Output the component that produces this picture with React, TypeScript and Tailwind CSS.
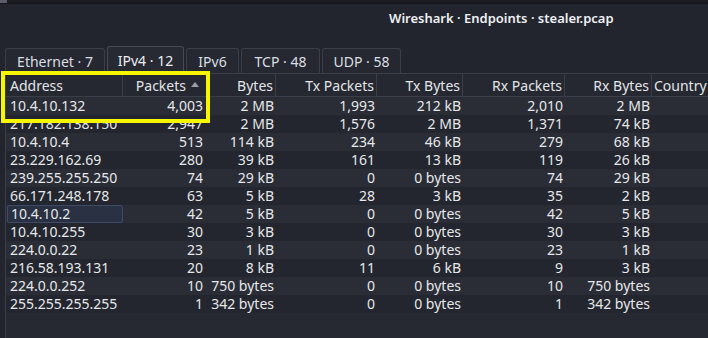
import React from 'react';

interface EndpointRow {
  address: string;
  packets: string;
  bytes: string;
  txPackets: string;
  txBytes: string;
  rxPackets: string;
  rxBytes: string;
}

const rows: EndpointRow[] = [
  { address: '10.4.10.132', packets: '4,003', bytes: '2 MB', txPackets: '1,993', txBytes: '212 kB', rxPackets: '2,010', rxBytes: '2 MB' },
  { address: '217.182.138.150', packets: '2,947', bytes: '2 MB', txPackets: '1,576', txBytes: '2 MB', rxPackets: '1,371', rxBytes: '74 kB' },
  { address: '10.4.10.4', packets: '513', bytes: '114 kB', txPackets: '234', txBytes: '46 kB', rxPackets: '279', rxBytes: '68 kB' },
  { address: '23.229.162.69', packets: '280', bytes: '39 kB', txPackets: '161', txBytes: '13 kB', rxPackets: '119', rxBytes: '26 kB' },
  { address: '239.255.255.250', packets: '74', bytes: '29 kB', txPackets: '0', txBytes: '0 bytes', rxPackets: '74', rxBytes: '29 kB' },
  { address: '66.171.248.178', packets: '63', bytes: '5 kB', txPackets: '28', txBytes: '3 kB', rxPackets: '35', rxBytes: '2 kB' },
  { address: '10.4.10.2', packets: '42', bytes: '5 kB', txPackets: '0', txBytes: '0 bytes', rxPackets: '42', rxBytes: '5 kB' },
  { address: '10.4.10.255', packets: '30', bytes: '3 kB', txPackets: '0', txBytes: '0 bytes', rxPackets: '30', rxBytes: '3 kB' },
  { address: '224.0.0.22', packets: '23', bytes: '1 kB', txPackets: '0', txBytes: '0 bytes', rxPackets: '23', rxBytes: '1 kB' },
  { address: '216.58.193.131', packets: '20', bytes: '8 kB', txPackets: '11', txBytes: '6 kB', rxPackets: '9', rxBytes: '3 kB' },
  { address: '224.0.0.252', packets: '10', bytes: '750 bytes', txPackets: '0', txBytes: '0 bytes', rxPackets: '10', rxBytes: '750 bytes' },
  { address: '255.255.255.255', packets: '1', bytes: '342 bytes', txPackets: '0', txBytes: '0 bytes', rxPackets: '1', rxBytes: '342 bytes' },
];

const tabs = [
  { label: 'Ethernet · 7', width: 'w-[100px]' },
  { label: 'IPv4 · 12', width: 'w-[77px]', active: true },
  { label: 'IPv6', width: 'w-[53px]' },
  { label: 'TCP · 48', width: 'w-[79px]' },
  { label: 'UDP · 58', width: 'w-[79px]' },
];

const cols = 'grid grid-cols-[117px_87px_66px_101px_86px_102px_87px_1fr]';

const App: React.FC = () => {
  return (
    <div
      className="relative w-[708px] h-[338px] overflow-hidden bg-[#22252d] text-[#e6e7ea]"
      style={{ fontFamily: '"Noto Sans", "Open Sans", sans-serif' }}
    >
      {/* title bar */}
      <div className="h-[4px] bg-[#1a1c22] border-b border-[#121419] flex">
        <div className="w-[7px] h-[3px] bg-[#5a5e6a]" />
      </div>
      <div className="h-[30px] flex items-center pl-[389px] text-[13px] font-semibold text-[#eef0f4]">
        Wireshark · Endpoints · stealer.pcap
      </div>

      {/* tabs */}
      <div className="mt-[12px] pl-[5px] flex items-end gap-[2px] h-[27px]">
        {tabs.map((t) => (
          <div
            key={t.label}
            className={`${t.width} flex items-center justify-center text-[14px] border border-b-0 rounded-t-[3px] ${
              t.active
                ? 'h-[27px] bg-[#272a33] border-[#454a55] text-[#eceef2]'
                : 'h-[25px] bg-[#252831] border-[#3a3e48] text-[#dcdee3]'
            }`}
          >
            {t.label}
          </div>
        ))}
      </div>

      {/* table pane */}
      <div className="ml-[5px] border-l border-t border-[#3a3e48] bg-[#262931] h-[265px]">
        {/* header */}
        <div className={`${cols} h-[23px] bg-[#252831] border-b border-[#3a3e48] text-[14px] text-[#e2e4e8]`}>
          <div className="pl-[4px] flex items-center border-r border-[#3a3e48]">Address</div>
          <div className="pr-[10px] flex items-center justify-end gap-[5px] border-r border-[#3a3e48]">
            Packets
            <svg width="8" height="5" viewBox="0 0 8 5" className="mb-[2px]">
              <path d="M0 5 L4 0 L8 5 Z" fill="#9a9ea8" />
            </svg>
          </div>
          {['Bytes', 'Tx Packets', 'Tx Bytes', 'Rx Packets', 'Rx Bytes'].map((h) => (
            <div key={h} className="pr-[2px] flex items-center justify-end border-r border-[#3a3e48]">
              {h}
            </div>
          ))}
          <div className="pl-[2px] flex items-center whitespace-nowrap">Country</div>
        </div>

        {/* rows */}
        {rows.map((r, i) => (
          <div
            key={r.address}
            className={`${cols} h-[18px] text-[14px] leading-[18px] ${i % 2 === 0 ? 'bg-[#2a2d36]' : 'bg-[#23262e]'}`}
          >
            <div className="pl-[1px]">
              <div
                className={`pl-[3px] h-[18px] ${
                  r.address === '10.4.10.2' ? 'bg-[#2a3142] border border-[#3d4b66] rounded-[2px] leading-[16px]' : ''
                }`}
              >
                {r.address}
              </div>
            </div>
            <div className="text-right pr-[7px]">{r.packets}</div>
            <div className="text-right pr-[2px] whitespace-nowrap">{r.bytes}</div>
            <div className="text-right pr-[2px]">{r.txPackets}</div>
            <div className="text-right pr-[2px] whitespace-nowrap">{r.txBytes}</div>
            <div className="text-right pr-[2px]">{r.rxPackets}</div>
            <div className="text-right pr-[2px] whitespace-nowrap">{r.rxBytes}</div>
            <div />
          </div>
        ))}
      </div>

      {/* annotation highlight */}
      <div className="absolute left-[1px] top-[71px] w-[209px] h-[52px] border-[4px] border-[#f6f600]" />
    </div>
  );
};

export default App;
